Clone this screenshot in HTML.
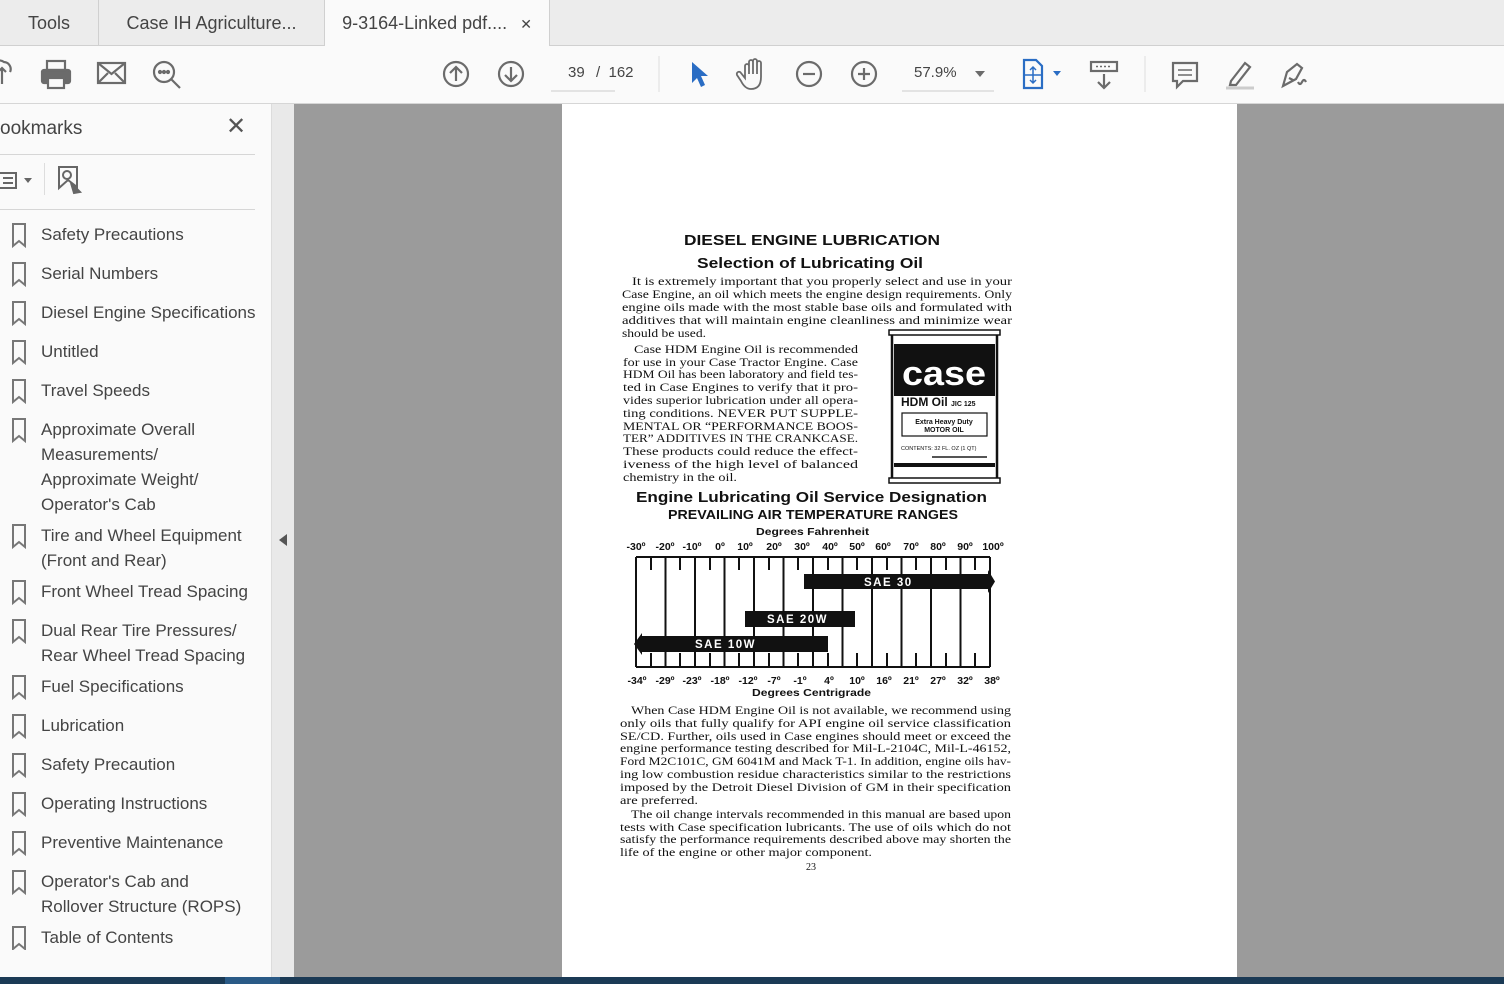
<!DOCTYPE html>
<html><head><meta charset="utf-8"><style>
*{margin:0;padding:0;box-sizing:border-box}
body{width:1504px;height:984px;overflow:hidden;background:#9b9b9b;font-family:"Liberation Sans",sans-serif;position:relative}
.abs{position:absolute}
.tabbar{left:0;top:0;width:1504px;height:46px;background:#ececec;border-bottom:1px solid #d0d0d0}
.tab{top:0;height:46px;font-size:18px;color:#444;line-height:46px;text-align:center;border-right:1px solid #d0d0d0}
.tool{left:0;top:46px;width:1504px;height:58px;background:#fafafa;border-bottom:1px solid #d6d6d6}
.side{left:0;top:104px;width:271px;height:873px;background:#fafafa}
.strip{left:271px;top:104px;width:23px;height:873px;background:#e9e9e9;border-left:1px solid #dcdcdc}
.bm{left:41px;font-size:17px;color:#444;line-height:25px}
</style></head><body>
<div class="abs tabbar"></div>
<div class="abs tab" style="left:0;width:99px">Tools</div>
<div class="abs tab" style="left:99px;width:226px">Case IH Agriculture...</div>
<div class="abs tab" style="left:325px;width:225px;background:#fafafa;height:47px">9-3164-Linked pdf.... <span style="font-size:14px;margin-left:8px">✕</span></div>
<div class="abs tool"></div>
<svg class="abs" style="left:0;top:46px" width="1504" height="58" fill="none" stroke="#6b6b6b" stroke-width="2.2">
<path d="M-6 30a8 8 0 0 1 10-14a7 7 0 0 1 6 10M2 22v16M-2 26l4-4 4 4"/>
<rect x="42" y="24" width="28" height="13" rx="2" fill="#6b6b6b"/><rect x="47" y="15" width="18" height="9" /><rect x="48" y="32" width="16" height="10" fill="#fafafa"/>
<rect x="98" y="17" width="27" height="20"/><path d="M98 17l13.5 11L125 17M98 37l10-10M125 37l-10-10"/>
<circle cx="164" cy="26" r="10"/><path d="M171 33l9 9"/><circle cx="160" cy="26" r="1" fill="#6b6b6b"/><circle cx="164" cy="26" r="1" fill="#6b6b6b"/><circle cx="168" cy="26" r="1" fill="#6b6b6b"/>
<circle cx="456" cy="28" r="12"/><path d="M456 35V21M450 27l6-6 6 6"/>
<circle cx="511" cy="28" r="12"/><path d="M511 21v14M505 29l6 6 6-6"/>
<path d="M551 45h64" stroke="#ccc" stroke-width="1"/>
<path d="M659 10v36" stroke="#ddd" stroke-width="1"/>
<path d="M692 16l16 14h-7l4 9-4 2-4-9-5 5z" fill="#2a6dc4" stroke="none"/>
<path d="M745 32v-12a2 2 0 0 1 4 0v8v-12a2 2 0 0 1 4 0v12v-13a2 2 0 0 1 4 0v13v-11a2 2 0 0 1 4 0v14q0 12-10 12q-6 0-10-8l-4-6a2 2 0 0 1 4-2z" stroke-width="1.8"/>
<circle cx="809" cy="28" r="12"/><path d="M803 28h12"/>
<circle cx="864" cy="28" r="12"/><path d="M858 28h12M864 22v12"/>
<path d="M902 45h92" stroke="#ccc" stroke-width="1"/>
<path d="M975 25h10l-5 6z" fill="#6b6b6b" stroke="none"/>
<path d="M1024 14h12l6 6v22h-18z" stroke="#2a6dc4"/><path d="M1033 21v16M1025 29h16M1030 24l3-3 3 3M1030 34l3 3 3-3" stroke="#2a6dc4" stroke-width="1.5"/>
<path d="M1053 25h8l-4 5z" fill="#2a6dc4" stroke="none"/>
<rect x="1091" y="16" width="26" height="9"/><path d="M1096 20.5h16" stroke-dasharray="2 2" stroke-width="1.5"/><path d="M1104 28v14M1098 36l6 6 6-6"/>
<path d="M1145 10v36" stroke="#ddd" stroke-width="1"/>
<path d="M1173 17h24v18h-14l-6 6v-6h-4z"/><path d="M1178 24h14M1178 29h14" stroke-width="1.5"/>
<path d="M1231 35l14-18 5 4-14 18h-6z"/><path d="M1226 42h28" stroke="#ccc" stroke-width="3"/>
<path d="M1283 40l4-14 10-8 5 4-6 11-13 7zM1289 32l4 2M1298 36q2 4 4 0t4 0"/>
</svg>
<div class="abs" style="left:568px;top:64px;font-size:15px;color:#444">39</div>
<div class="abs" style="left:596px;top:64px;font-size:15px;color:#444">/ &nbsp;162</div>
<div class="abs" style="left:914px;top:64px;font-size:15px;color:#444">57.9%</div>

<div class="abs side"></div>
<div class="abs strip"></div>
<svg class="abs" style="left:277px;top:533px" width="12" height="14"><path d="M10 1L2 7l8 6z" fill="#555"/></svg>
<div class="abs" style="left:0;top:118px;font-size:19px;color:#444">ookmarks</div>
<div class="abs" style="left:226px;top:112px;font-size:24px;color:#555">✕</div>
<div class="abs" style="left:0;top:154px;width:255px;height:1px;background:#d6d6d6"></div>
<div class="abs" style="left:0;top:209px;width:255px;height:1px;background:#d6d6d6"></div>
<div class="abs" style="left:44px;top:163px;width:1px;height:32px;background:#ddd"></div>
<svg class="abs" style="left:0;top:165px" width="90" height="32" fill="none" stroke="#666" stroke-width="2">
<rect x="-4" y="8" width="20" height="15"/><path d="M3 13h10M3 18h10"/><path d="M24 13h8l-4 5z" fill="#666" stroke="none"/>
<path d="M59 2h18v20l-9-7-9 8z"/><circle cx="67" cy="10" r="4"/><path d="M71 18l9 9-6 1z" fill="#666"/>
</svg>
<svg class="abs" style="left:0;top:210px" width="40" height="740" fill="#fafafa" stroke="#777" stroke-width="2">
<g id="b"><path d="M13 14h12v22l-6-5-6 5z"/></g>
<use href="#b" y="39"/><use href="#b" y="78"/><use href="#b" y="117"/><use href="#b" y="156"/><use href="#b" y="195"/>
<use href="#b" y="301"/><use href="#b" y="357"/><use href="#b" y="396"/><use href="#b" y="452"/><use href="#b" y="491"/>
<use href="#b" y="530"/><use href="#b" y="569"/><use href="#b" y="608"/><use href="#b" y="647"/><use href="#b" y="703"/>
</svg>
<div class="abs bm" style="top:222px">Safety Precautions</div>
<div class="abs bm" style="top:261px">Serial Numbers</div>
<div class="abs bm" style="top:300px">Diesel Engine Specifications</div>
<div class="abs bm" style="top:339px">Untitled</div>
<div class="abs bm" style="top:378px">Travel Speeds</div>
<div class="abs bm" style="top:417px">Approximate Overall<br>Measurements/<br>Approximate Weight/<br>Operator's Cab</div>
<div class="abs bm" style="top:523px">Tire and Wheel Equipment<br>(Front and Rear)</div>
<div class="abs bm" style="top:579px">Front Wheel Tread Spacing</div>
<div class="abs bm" style="top:618px">Dual Rear Tire Pressures/<br>Rear Wheel Tread Spacing</div>
<div class="abs bm" style="top:674px">Fuel Specifications</div>
<div class="abs bm" style="top:713px">Lubrication</div>
<div class="abs bm" style="top:752px">Safety Precaution</div>
<div class="abs bm" style="top:791px">Operating Instructions</div>
<div class="abs bm" style="top:830px">Preventive Maintenance</div>
<div class="abs bm" style="top:869px">Operator's Cab and<br>Rollover Structure (ROPS)</div>
<div class="abs bm" style="top:925px">Table of Contents</div>

<div class="abs" style="left:562px;top:104px;width:675px;height:873px;background:#fff"></div>
<div class="abs" style="left:0;top:977px;width:1504px;height:7px;background:#1b3a55"></div>
<div class="abs" style="left:225px;top:977px;width:55px;height:7px;background:#2a5a86"></div>

<svg class="abs" style="left:0;top:0" width="1504" height="984" font-family="Liberation Serif,serif" font-size="11.5" fill="#111">
<g font-family="Liberation Sans,sans-serif" font-weight="bold">
<text x="684" y="245" font-size="14.5" textLength="256" lengthAdjust="spacingAndGlyphs">DIESEL ENGINE LUBRICATION</text>
<text x="697" y="268" font-size="14.5" textLength="226" lengthAdjust="spacingAndGlyphs">Selection of Lubricating Oil</text>
<text x="636" y="502" font-size="14.5" textLength="351" lengthAdjust="spacingAndGlyphs">Engine Lubricating Oil Service Designation</text>
<text x="668" y="519" font-size="12.5" textLength="290" lengthAdjust="spacingAndGlyphs">PREVAILING AIR TEMPERATURE RANGES</text>
<text x="756" y="535" font-size="10.5" textLength="113" lengthAdjust="spacingAndGlyphs">Degrees Fahrenheit</text>
<text x="752" y="696" font-size="10.5" textLength="119" lengthAdjust="spacingAndGlyphs">Degrees Centrigrade</text>
</g>
<g>
<text x="632" y="285" textLength="380" lengthAdjust="spacingAndGlyphs">It is extremely important that you properly select and use in your</text>
<text x="622" y="298" textLength="390" lengthAdjust="spacingAndGlyphs">Case Engine, an oil which meets the engine design requirements. Only</text>
<text x="622" y="311" textLength="390" lengthAdjust="spacingAndGlyphs">engine oils made with the most stable base oils and formulated with</text>
<text x="622" y="324" textLength="390" lengthAdjust="spacingAndGlyphs">additives that will maintain engine cleanliness and minimize wear</text>
<text x="622" y="337" textLength="84" lengthAdjust="spacingAndGlyphs">should be used.</text>
<text x="634" y="353" textLength="224" lengthAdjust="spacingAndGlyphs">Case HDM Engine Oil is recommended</text>
<text x="623" y="366" textLength="235" lengthAdjust="spacingAndGlyphs">for use in your Case Tractor Engine. Case</text>
<text x="623" y="378" textLength="235" lengthAdjust="spacingAndGlyphs">HDM Oil has been laboratory and field tes-</text>
<text x="623" y="391" textLength="235" lengthAdjust="spacingAndGlyphs">ted in Case Engines to verify that it pro-</text>
<text x="623" y="404" textLength="235" lengthAdjust="spacingAndGlyphs">vides superior lubrication under all opera-</text>
<text x="623" y="417" textLength="235" lengthAdjust="spacingAndGlyphs">ting conditions. NEVER PUT SUPPLE-</text>
<text x="623" y="430" textLength="235" lengthAdjust="spacingAndGlyphs">MENTAL OR “PERFORMANCE BOOS-</text>
<text x="623" y="442" textLength="235" lengthAdjust="spacingAndGlyphs">TER” ADDITIVES IN THE CRANKCASE.</text>
<text x="623" y="455" textLength="235" lengthAdjust="spacingAndGlyphs">These products could reduce the effect-</text>
<text x="623" y="468" textLength="235" lengthAdjust="spacingAndGlyphs">iveness of the high level of balanced</text>
<text x="623" y="481" textLength="114" lengthAdjust="spacingAndGlyphs">chemistry in the oil.</text>
<text x="631" y="714" textLength="380" lengthAdjust="spacingAndGlyphs">When Case HDM Engine Oil is not available, we recommend using</text>
<text x="620" y="727" textLength="391" lengthAdjust="spacingAndGlyphs">only oils that fully qualify for API engine oil service classification</text>
<text x="620" y="740" textLength="391" lengthAdjust="spacingAndGlyphs">SE/CD. Further, oils used in Case engines should meet or exceed the</text>
<text x="620" y="752" textLength="391" lengthAdjust="spacingAndGlyphs">engine performance testing described for Mil-L-2104C, Mil-L-46152,</text>
<text x="620" y="765" textLength="391" lengthAdjust="spacingAndGlyphs">Ford M2C101C, GM 6041M and Mack T-1. In addition, engine oils hav-</text>
<text x="620" y="778" textLength="391" lengthAdjust="spacingAndGlyphs">ing low combustion residue characteristics similar to the restrictions</text>
<text x="620" y="791" textLength="391" lengthAdjust="spacingAndGlyphs">imposed by the Detroit Diesel Division of GM in their specification</text>
<text x="620" y="804" textLength="78" lengthAdjust="spacingAndGlyphs">are preferred.</text>
<text x="631" y="818" textLength="380" lengthAdjust="spacingAndGlyphs">The oil change intervals recommended in this manual are based upon</text>
<text x="620" y="831" textLength="391" lengthAdjust="spacingAndGlyphs">tests with Case specification lubricants. The use of oils which do not</text>
<text x="620" y="843" textLength="391" lengthAdjust="spacingAndGlyphs">satisfy the performance requirements described above may shorten the</text>
<text x="620" y="856" textLength="252" lengthAdjust="spacingAndGlyphs">life of the engine or other major component.</text>
<text x="806" y="870" font-size="10">23</text>
</g>
<!-- can -->
<rect x="892" y="332" width="105" height="149" fill="none" stroke="#111" stroke-width="2.5"/>
<rect x="889" y="330" width="111" height="5" fill="#fff" stroke="#111" stroke-width="1.5"/>
<rect x="889" y="478" width="111" height="5" fill="#fff" stroke="#111" stroke-width="1.5"/>
<rect x="894" y="344" width="101" height="52" fill="#111"/>
<text x="944" y="385" text-anchor="middle" font-family="Liberation Sans,sans-serif" font-weight="bold" font-size="34" fill="#fff" textLength="84" lengthAdjust="spacingAndGlyphs">case</text>
<text x="901" y="406" font-family="Liberation Sans,sans-serif" font-weight="bold" font-size="12">HDM Oil <tspan font-size="7">JIC 125</tspan></text>
<rect x="902" y="413" width="85" height="23" fill="none" stroke="#111" stroke-width="1.2"/>
<text x="944" y="424" text-anchor="middle" font-family="Liberation Sans,sans-serif" font-weight="bold" font-size="7">Extra Heavy Duty</text>
<text x="944" y="432" text-anchor="middle" font-family="Liberation Sans,sans-serif" font-weight="bold" font-size="7">MOTOR OIL</text>
<text x="901" y="450" font-family="Liberation Sans,sans-serif" font-size="5.5">CONTENTS: 32 FL. OZ (1 QT)</text>
<rect x="932" y="456" width="55" height="2" fill="#555"/>
<rect x="894" y="463" width="101" height="4" fill="#111"/>
<!-- chart -->
<g stroke="#111" stroke-width="2">
<path d="M636 557H990M636 667H990"/>
<path d="M636 557v110M665.5 557v110M695 557v110M724.5 557v110M754 557v110M783.5 557v110M813 557v110M842.5 557v110M872 557v110M901.5 557v110M931 557v110M960.5 557v110M990 557v110"/>
<path d="M651 557v13M680 557v13M710 557v13M739 557v13M769 557v13M798 557v13M828 557v13M857 557v13M887 557v13M916 557v13M946 557v13M975 557v13"/>
<path d="M651 667v-14M680 667v-14M710 667v-14M739 667v-14M769 667v-14M798 667v-14M828 667v-14M857 667v-14M887 667v-14M916 667v-14M946 667v-14M975 667v-14"/>
</g>
<path d="M804 574H988v-4l7 11.5-7 11.5v-4H804z" fill="#111"/>
<rect x="745" y="611" width="110" height="16" fill="#111"/>
<path d="M828 636H642v-3l-8 11 8 11v-3H828z" fill="#111"/>
<g font-family="Liberation Sans,sans-serif" font-weight="bold" fill="#fff" font-size="11.5" letter-spacing="1.5">
<text x="864" y="586">SAE 30</text><text x="767" y="623">SAE 20W</text><text x="695" y="648">SAE 10W</text>
</g>
<g font-family="Liberation Sans,sans-serif" font-weight="bold" font-size="10.5" text-anchor="middle">
<text x="636" y="550">-30º</text><text x="665" y="550">-20º</text><text x="692" y="550">-10º</text><text x="720" y="550">0º</text><text x="745" y="550">10º</text><text x="774" y="550">20º</text><text x="802" y="550">30º</text><text x="830" y="550">40º</text><text x="857" y="550">50º</text><text x="883" y="550">60º</text><text x="911" y="550">70º</text><text x="938" y="550">80º</text><text x="965" y="550">90º</text><text x="993" y="550">100º</text>
<text x="637" y="684">-34º</text><text x="665" y="684">-29º</text><text x="692" y="684">-23º</text><text x="720" y="684">-18º</text><text x="748" y="684">-12º</text><text x="774" y="684">-7º</text><text x="800" y="684">-1º</text><text x="829" y="684">4º</text><text x="857" y="684">10º</text><text x="884" y="684">16º</text><text x="911" y="684">21º</text><text x="938" y="684">27º</text><text x="965" y="684">32º</text><text x="992" y="684">38º</text>
</g>
</svg>
</body></html>
